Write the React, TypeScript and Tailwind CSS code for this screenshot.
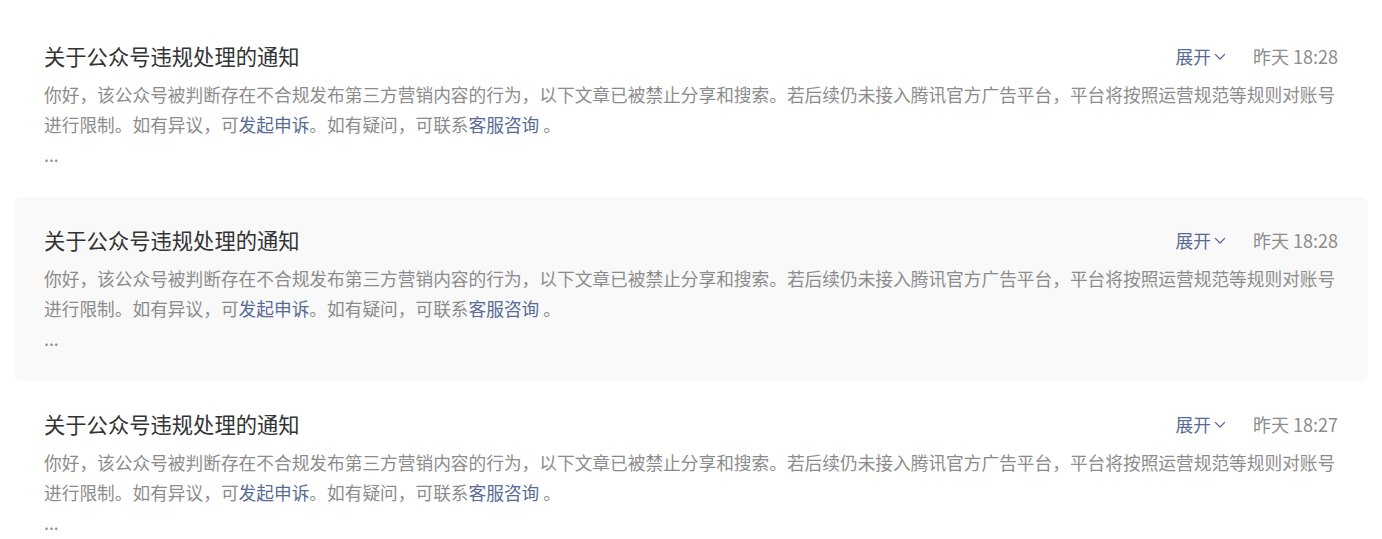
import React from "react";

const items = [
  { time: "昨天 18:28", active: false },
  { time: "昨天 18:28", active: true },
  { time: "昨天 18:27", active: false },
];

function Chevron() {
  return (
    <svg width="12" height="8" viewBox="0 0 12 8" className="ml-[3px] mt-[2px]" fill="none">
      <path d="M1.5 1.5 L6 6 L10.5 1.5" stroke="#576b95" strokeWidth="1.2" strokeLinecap="round" strokeLinejoin="round" />
    </svg>
  );
}

function Item({ time, active }: { time: string; active: boolean }) {
  return (
    <div className={`rounded-[8px] px-[30px] pt-[29px] pb-[28px] ${active ? "bg-[#f9f9f9]" : ""}`}>
      <div className="flex items-center h-[28px]">
        <div className="flex-1 text-[21.3px] leading-[28px] text-[#333333]">关于公众号违规处理的通知</div>
        <div className="flex items-center text-[17.7px] leading-[28px] text-[#576b95]">
          展开
          <Chevron />
        </div>
        <div className="ml-[27px] text-[18px] leading-[28px] text-[#8c8c8c]">{time}</div>
      </div>
      <div className="mt-[9px] text-[17.7px] leading-[30px] text-[#8c8c8c]">
        <div>
          你好，该公众号被判断存在不合规发布第三方营销内容的行为，以下文章已被禁止分享和搜索。若后续仍未接入腾讯官方广告平台，平台将按照运营规范等规则对账号进行限制。如有异议，可
          <span className="text-[#576b95]">发起申诉</span>。如有疑问，可联系<span className="text-[#576b95]">客服咨询</span> 。
        </div>
        <div>...</div>
      </div>
    </div>
  );
}

export default function App() {
  return (
    <div
      className="w-[1382px] h-[539px] overflow-hidden bg-white px-[14px] pt-[13px]"
      style={{ fontFamily: '"Noto Sans CJK SC", "Noto Sans", sans-serif' }}
    >
      {items.map((it, i) => (
        <Item key={i} time={it.time} active={it.active} />
      ))}
    </div>
  );
}
